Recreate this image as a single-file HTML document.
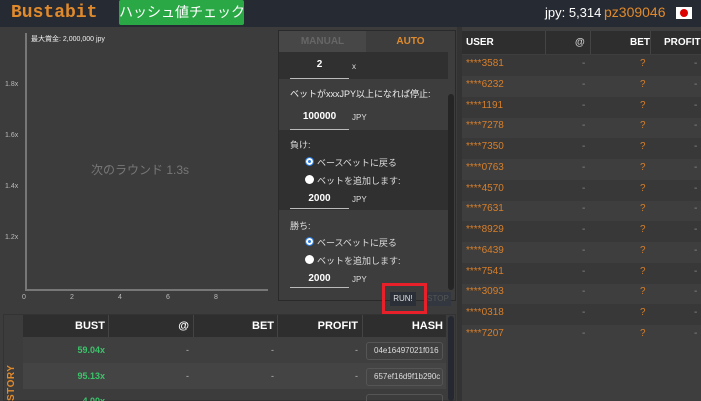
<!DOCTYPE html>
<html><head><meta charset="utf-8"><style>
*{margin:0;padding:0;box-sizing:border-box}
html,body{width:701px;height:401px;overflow:hidden}
body{background:#3c3c3c;font-family:"Liberation Sans","Noto Sans CJK JP",sans-serif;color:#ddd}
#w{position:relative;width:701px;height:401px;overflow:hidden}
.a{position:absolute;white-space:nowrap}
.hdr{left:0;top:0;width:701px;height:27px;background:#262a33}
.sm{font-size:9px}
.b{font-weight:bold}
.ul{border-bottom:1px solid #bbb}
.radio{width:9px;height:9px;border-radius:50%;background:#fff}
.radio.on{background:#2a7de1;box-shadow:inset 0 0 0 2px #fff;border:1px solid #2a7de1}
.ur{font-size:10px;color:#d87f2a}
</style></head><body><div id="w">
<div class="a hdr"></div>
<div class="a" style="left:11px;top:3px;font-family:'Liberation Mono',monospace;font-weight:bold;font-size:18px;color:#e08a2c">Bustabit</div>
<div class="a" style="left:119px;top:0;width:125px;height:25px;background:#2aa845;border-radius:2px;color:#fff;font-size:14px;line-height:25px;text-align:center">ハッシュ値チェック</div>
<div class="a" style="left:545px;top:5px;font-size:13px;color:#fff">jpy: 5,314</div>
<div class="a" style="left:604px;top:4px;font-size:14px;color:#e08a2c">pz309046</div>
<div class="a" style="left:676px;top:7px;width:16px;height:12px;background:#fff"><div class="a" style="left:4px;top:2px;width:8px;height:8px;border-radius:50%;background:#d00"></div></div>

<div class="a" style="left:25px;top:33px;width:2px;height:258px;background:#777"></div>
<div class="a" style="left:25px;top:289px;width:243px;height:2px;background:#777"></div>
<div class="a" style="left:31px;top:34px;font-size:7px;color:#eee">最大賞金: 2,000,000 jpy</div>
<div class="a" style="left:5px;top:81px;font-size:7px;color:#bbb">1.8x</div>
<div class="a" style="left:5px;top:132px;font-size:7px;color:#bbb">1.6x</div>
<div class="a" style="left:5px;top:183px;font-size:7px;color:#bbb">1.4x</div>
<div class="a" style="left:5px;top:234px;font-size:7px;color:#bbb">1.2x</div>
<div class="a" style="left:22px;top:294px;font-size:7px;color:#bbb">0</div>
<div class="a" style="left:70px;top:294px;font-size:7px;color:#bbb">2</div>
<div class="a" style="left:118px;top:294px;font-size:7px;color:#bbb">4</div>
<div class="a" style="left:166px;top:294px;font-size:7px;color:#bbb">6</div>
<div class="a" style="left:214px;top:294px;font-size:7px;color:#bbb">8</div>
<div class="a" style="left:91px;top:161px;font-size:12px;color:#777">次のラウンド 1.3s</div>

<div class="a" style="left:278px;top:30px;width:178px;height:271px;border:1px solid #2a2a2a;background:#3d3d3d"></div>
<div class="a b" style="left:279px;top:31px;width:87px;height:21px;background:#474747;color:#666;font-size:10px;text-align:center;line-height:21px">MANUAL</div>
<div class="a b" style="left:366px;top:31px;width:89px;height:21px;background:#3d3d3d;color:#e08a2c;font-size:10px;text-align:center;line-height:21px">AUTO</div>
<div class="a" style="left:279px;top:52px;width:169px;height:27px;background:#303030"></div>
<div class="a" style="left:279px;top:130px;width:169px;height:80px;background:#303030"></div>
<div class="a" style="left:448px;top:52px;width:7px;height:248px;background:#3d3d3d"></div>
<div class="a" style="left:448px;top:94px;width:6px;height:196px;border-radius:3px;background:#252525"></div>
<div class="a b ul" style="left:290px;top:59px;width:59px;height:20px;font-size:10px;color:#fff;text-align:center">2</div>
<div class="a sm" style="left:352px;top:62px;color:#ddd;font-size:8px">x</div>
<div class="a sm" style="left:290px;top:87px;color:#eee">ベットがxxxJPY以上になれば停止:</div>
<div class="a b ul" style="left:290px;top:111px;width:59px;height:19px;font-size:10px;color:#fff;text-align:center">100000</div>
<div class="a sm" style="left:352px;top:113px;font-size:8px">JPY</div>
<div class="a sm" style="left:290px;top:138px">負け:</div>
<div class="a radio on" style="left:305px;top:157px"></div>
<div class="a sm" style="left:317px;top:156px">ベースベットに戻る</div>
<div class="a radio" style="left:305px;top:175px"></div>
<div class="a sm" style="left:317px;top:174px">ベットを追加します:</div>
<div class="a b ul" style="left:290px;top:193px;width:59px;height:16px;font-size:10px;color:#fff;text-align:center">2000</div>
<div class="a sm" style="left:352px;top:195px;font-size:8px">JPY</div>
<div class="a sm" style="left:290px;top:219px">勝ち:</div>
<div class="a radio on" style="left:305px;top:237px"></div>
<div class="a sm" style="left:317px;top:236px">ベースベットに戻る</div>
<div class="a radio" style="left:305px;top:255px"></div>
<div class="a sm" style="left:317px;top:254px">ベットを追加します:</div>
<div class="a b ul" style="left:290px;top:273px;width:59px;height:15px;font-size:10px;color:#fff;text-align:center">2000</div>
<div class="a sm" style="left:352px;top:275px;font-size:8px">JPY</div>
<div class="a" style="left:390px;top:292px;width:26px;height:14px;background:#2b2f38;color:#ddd;font-size:8px;text-align:center;line-height:14px">RUN!</div>
<div class="a" style="left:425px;top:292px;width:26px;height:14px;background:#333840;color:#555;font-size:8px;text-align:center;line-height:14px">STOP</div>
<div class="a" style="left:382px;top:283px;width:45px;height:31px;border:3px solid #e8202a"></div>

<div class="a" style="left:3px;top:314px;width:453px;height:87px;border:1px solid #333;background:#3c3c3c"></div>
<div class="a b" style="left:6px;top:412px;transform:rotate(-90deg);transform-origin:0 0;font-size:10px;color:#e08a2c;letter-spacing:0.5px">HISTORY</div>
<div class="a" style="left:23px;top:315px;width:423px;height:22px;background:#2e2e2e"></div>
<div class="a" style="left:23px;top:337px;width:423px;height:26px;background:#3f3f3f"></div>
<div class="a" style="left:23px;top:363px;width:423px;height:26px;background:#444"></div>
<div class="a" style="left:108px;top:315px;width:1px;height:22px;background:#444"></div>
<div class="a" style="left:193px;top:315px;width:1px;height:22px;background:#444"></div>
<div class="a" style="left:277px;top:315px;width:1px;height:22px;background:#444"></div>
<div class="a" style="left:362px;top:315px;width:1px;height:22px;background:#444"></div>
<div class="a b" style="left:23px;top:320px;width:82px;text-align:right;font-size:11px;color:#fff">BUST</div>
<div class="a b" style="left:109px;top:320px;width:80px;text-align:right;font-size:11px;color:#fff">@</div>
<div class="a b" style="left:194px;top:320px;width:80px;text-align:right;font-size:11px;color:#fff">BET</div>
<div class="a b" style="left:278px;top:320px;width:80px;text-align:right;font-size:11px;color:#fff">PROFIT</div>
<div class="a b" style="left:363px;top:320px;width:80px;text-align:right;font-size:11px;color:#fff">HASH</div>
<div class="a b" style="left:23px;top:345px;width:82px;text-align:right;font-size:9px;color:#3bc46a">59.04x</div>
<div class="a b" style="left:23px;top:371px;width:82px;text-align:right;font-size:9px;color:#3bc46a">95.13x</div>
<div class="a b" style="left:23px;top:396px;width:82px;text-align:right;font-size:9px;color:#3bc46a">4.00x</div>
<div class="a" style="left:109px;top:345px;width:80px;text-align:right;font-size:9px;color:#bbb">-</div>
<div class="a" style="left:194px;top:345px;width:80px;text-align:right;font-size:9px;color:#bbb">-</div>
<div class="a" style="left:278px;top:345px;width:80px;text-align:right;font-size:9px;color:#bbb">-</div>
<div class="a" style="left:109px;top:371px;width:80px;text-align:right;font-size:9px;color:#bbb">-</div>
<div class="a" style="left:194px;top:371px;width:80px;text-align:right;font-size:9px;color:#bbb">-</div>
<div class="a" style="left:278px;top:371px;width:80px;text-align:right;font-size:9px;color:#bbb">-</div>
<div class="a" style="left:366px;top:342px;width:77px;height:18px;border:1px solid #555;border-radius:3px;font-size:8px;color:#ddd;line-height:16px;padding-left:7px;overflow:hidden">04e16497021f016</div>
<div class="a" style="left:366px;top:368px;width:77px;height:18px;border:1px solid #555;border-radius:3px;font-size:8px;color:#ddd;line-height:16px;padding-left:7px;overflow:hidden">657ef16d9f1b290c</div>
<div class="a" style="left:366px;top:394px;width:77px;height:18px;border:1px solid #555;border-radius:3px"></div>
<div class="a" style="left:448px;top:316px;width:6px;height:85px;border-radius:3px;background:#252830"></div>

<div class="a" style="left:457px;top:27px;width:5px;height:374px;background:#333"></div>
<div class="a" style="left:462px;top:27px;width:239px;height:374px;background:#3e3e3e"></div>
<div class="a" style="left:462px;top:31px;width:239px;height:23px;background:#2e2e2e"></div>
<div class="a" style="left:545px;top:31px;width:1px;height:23px;background:#444"></div>
<div class="a" style="left:590px;top:31px;width:1px;height:23px;background:#444"></div>
<div class="a" style="left:650px;top:31px;width:1px;height:23px;background:#444"></div>
<div class="a b" style="left:466px;top:37px;font-size:10px;color:#fff">USER</div>
<div class="a b" style="left:575px;top:37px;font-size:10px;color:#ccc">@</div>
<div class="a b" style="left:630px;top:37px;font-size:10px;color:#fff">BET</div>
<div class="a b" style="left:664px;top:37px;font-size:10px;color:#fff">PROFIT</div>
<div class="a" style="left:462px;top:55px;width:239px;height:21px;background:#383838"></div>
<div class="a" style="left:462px;top:97px;width:239px;height:21px;background:#383838"></div>
<div class="a" style="left:462px;top:138px;width:239px;height:21px;background:#383838"></div>
<div class="a" style="left:462px;top:180px;width:239px;height:21px;background:#383838"></div>
<div class="a" style="left:462px;top:221px;width:239px;height:21px;background:#383838"></div>
<div class="a" style="left:462px;top:263px;width:239px;height:21px;background:#383838"></div>
<div class="a" style="left:462px;top:304px;width:239px;height:21px;background:#383838"></div>
<div class="a ur" style="left:466px;top:54px;line-height:20.75px">****3581<br>****6232<br>****1191<br>****7278<br>****7350<br>****0763<br>****4570<br>****7631<br>****8929<br>****6439<br>****7541<br>****3093<br>****0318<br>****7207</div>
<div class="a" style="left:582px;top:54px;font-size:10px;line-height:20.75px;color:#888">-<br>-<br>-<br>-<br>-<br>-<br>-<br>-<br>-<br>-<br>-<br>-<br>-<br>-</div>
<div class="a" style="left:640px;top:54px;font-size:10px;line-height:20.75px;color:#d87f2a">?<br>?<br>?<br>?<br>?<br>?<br>?<br>?<br>?<br>?<br>?<br>?<br>?<br>?</div>
<div class="a" style="left:694px;top:54px;font-size:10px;line-height:20.75px;color:#888">-<br>-<br>-<br>-<br>-<br>-<br>-<br>-<br>-<br>-<br>-<br>-<br>-<br>-</div>
</div></body></html>
